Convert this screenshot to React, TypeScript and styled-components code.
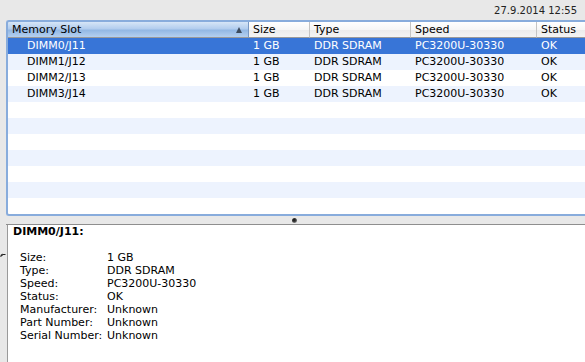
import styled, { createGlobalStyle } from "styled-components";
import { Fragment } from "react";

const GlobalStyle = createGlobalStyle`
  html, body {
    margin: 0;
    padding: 0;
    background: #e8e8e8;
    overflow: hidden;
  }
  body {
    font-family: "DejaVu Sans", "Lucida Grande", sans-serif;
    font-size: 11px;
    color: #000;
  }
`;

const Window = styled.div`
  width: 585px;
  height: 362px;
  display: flex;
  flex-direction: column;
  overflow: hidden;
`;

const TopBar = styled.div`
  height: 20px;
  display: flex;
  align-items: center;
  justify-content: flex-end;
  padding-right: 8px;
  font-size: 10px;
  color: #222;
`;

const TableFrame = styled.div`
  margin-left: 6px;
  width: 640px;
  height: 192px;
  border: 2px solid #88acdc;
  border-right: none;
  border-radius: 3px 0 0 3px;
  background: #fff;
  overflow: hidden;
  box-shadow: inset 0 0 0 1px #6e8fc0;
`;

const Grid = styled.div`
  display: grid;
  grid-template-columns: 241px 61px 101px 126px 111px;
`;

const HeaderCell = styled.div<{ $active?: boolean }>`
  height: 15px;
  line-height: 15px;
  padding-left: 4px;
  position: relative;
  border-bottom: 1px solid #9a9a9a;
  border-right: 1px solid ${(p) => (p.$active ? "#7897c2" : "#c4c4c4")};
  background: ${(p) =>
    p.$active
      ? "linear-gradient(to bottom, #d6e5f7 0%, #b2cdee 45%, #93b8e4 55%, #b5d0f0 100%)"
      : "linear-gradient(to bottom, #ffffff 0%, #f6f6f6 50%, #ececec 55%, #f4f4f4 100%)"};
  white-space: nowrap;
  overflow: hidden;
`;

const SortArrow = styled.span`
  position: absolute;
  right: 6px;
  top: 5px;
  width: 0;
  height: 0;
  border-left: 3.5px solid transparent;
  border-right: 3.5px solid transparent;
  border-bottom: 6px solid #3c4a5c;
`;

const Cell = styled.div<{ $bg: string; $fg: string; $indent?: number }>`
  height: 16px;
  line-height: 16px;
  padding-left: ${(p) => p.$indent ?? 4}px;
  background: ${(p) => p.$bg};
  color: ${(p) => p.$fg};
  white-space: nowrap;
  overflow: hidden;
`;

const Splitter = styled.div`
  height: 8px;
  display: flex;
  justify-content: center;
  align-items: center;
  border-bottom: 1px solid #8e8e8e;
  margin-left: 6px;
`;

const Dimple = styled.span`
  width: 5px;
  height: 5px;
  border-radius: 50%;
  margin-left: -2px;
  background: radial-gradient(circle at 40% 35%, #111 0%, #444 50%, #ddd 100%);
`;

const Lower = styled.div`
  flex: 1;
  display: flex;
`;

const Gutter = styled.div`
  width: 7px;
  position: relative;
`;

const ResizeMark = styled.svg`
  position: absolute;
  left: 0;
  top: 28px;
`;

const Detail = styled.div`
  flex: 1;
  background: #fff;
  border-left: 1px solid #9a9a9a;
  padding: 0 0 0 5px;
`;

const DetailTitle = styled.div`
  font-weight: bold;
  line-height: 14px;
  margin-bottom: 12px;
`;

const Fields = styled.div`
  display: grid;
  grid-template-columns: 87px auto;
  padding-left: 7px;
  line-height: 13px;
`;

const columns = ["Memory Slot", "Size", "Type", "Speed", "Status"];

const rows = [
  ["DIMM0/J11", "1 GB", "DDR SDRAM", "PC3200U-30330", "OK"],
  ["DIMM1/J12", "1 GB", "DDR SDRAM", "PC3200U-30330", "OK"],
  ["DIMM2/J13", "1 GB", "DDR SDRAM", "PC3200U-30330", "OK"],
  ["DIMM3/J14", "1 GB", "DDR SDRAM", "PC3200U-30330", "OK"],
];

const fields: [string, string][] = [
  ["Size:", "1 GB"],
  ["Type:", "DDR SDRAM"],
  ["Speed:", "PC3200U-30330"],
  ["Status:", "OK"],
  ["Manufacturer:", "Unknown"],
  ["Part Number:", "Unknown"],
  ["Serial Number:", "Unknown"],
];

const TOTAL_ROWS = 11;

const App = () => {
  const bodyRows = Array.from({ length: TOTAL_ROWS }, (_, i) => rows[i] || ["", "", "", "", ""]);

  return (
    <Window>
      <GlobalStyle />
      <TopBar>27.9.2014 12:55</TopBar>
      <TableFrame>
        <Grid>
          {columns.map((c, i) => (
            <HeaderCell key={c} $active={i === 0}>
              {c}
              {i === 0 && <SortArrow />}
            </HeaderCell>
          ))}
          {bodyRows.map((r, ri) =>
            r.map((v, ci) => {
              const selected = ri === 0;
              const bg = selected ? "#3875d7" : ri % 2 === 1 ? "#edf3fe" : "#ffffff";
              return (
                <Cell
                  key={`${ri}-${ci}`}
                  $bg={bg}
                  $fg={selected ? "#fff" : "#000"}
                  $indent={ci === 0 ? 19 : 4}
                >
                  {v}
                </Cell>
              );
            })
          )}
        </Grid>
      </TableFrame>
      <Splitter>
        <Dimple />
      </Splitter>
      <Lower>
        <Gutter>
          <ResizeMark width="6" height="5" viewBox="0 0 6 5">
            <path d="M0.5 4 L2.5 1.5 L5.5 1.5" stroke="#222" strokeWidth="1" fill="none" />
            <path d="M0 2.5 L2.5 0.5 L2.5 3 Z" fill="#222" />
          </ResizeMark>
        </Gutter>
        <Detail>
          <DetailTitle>DIMM0/J11:</DetailTitle>
          <Fields>
            {fields.map(([k, v]) => (
              <Fragment key={k}>
                <span>{k}</span>
                <span>{v}</span>
              </Fragment>
            ))}
          </Fields>
        </Detail>
      </Lower>
    </Window>
  );
};

export default App;
